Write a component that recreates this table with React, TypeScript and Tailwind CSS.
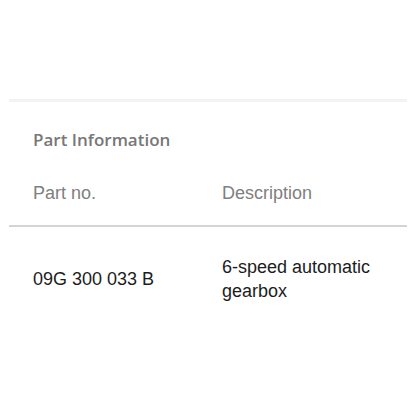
import React from "react";

export default function App() {
  return (
    <div className="w-[416px] h-[416px] bg-white px-[9px] pt-[99px] overflow-hidden" style={{ fontFamily: '"Liberation Sans", Arial, sans-serif' }}>
      <div className="h-[3px] bg-[#f3f3f3]" />
      <div className="pl-[24px] pt-[26px] text-[17px] leading-[24px] font-semibold text-[#777777] [font-family:'Open_Sans',sans-serif]">
        Part Information
      </div>
      <div className="grid grid-cols-[213px_1fr] pt-[29px] pb-[20px] text-[18px] leading-[24px] text-[#808080]">
        <div className="pl-[24px]">Part no.</div>
        <div>Description</div>
      </div>
      <div className="h-[2px] bg-[#d4d4d4]" />
      <div className="grid grid-cols-[213px_1fr] items-center pt-[28px] text-[18px] leading-[24px] text-[#1c1c1c]">
        <div className="pl-[24px]">09G 300 033 B</div>
        <div className="pr-[24px]">6-speed automatic gearbox</div>
      </div>
    </div>
  );
}
